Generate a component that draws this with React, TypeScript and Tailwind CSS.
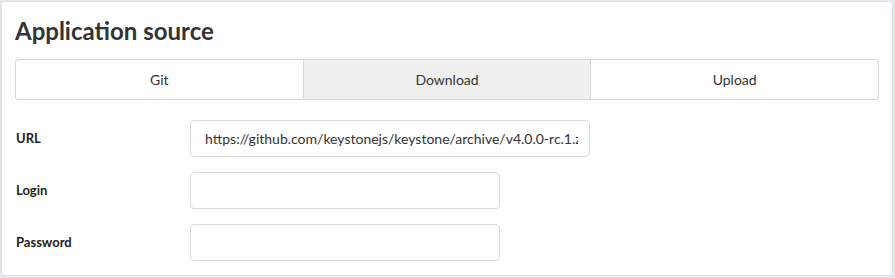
import React from "react";

export default function App() {
  const rows = [
    { label: "URL", value: "https://github.com/keystonejs/keystone/archive/v4.0.0-rc.1.zip", w: "w-[400px]" },
    { label: "Login", value: "", w: "w-[310px]" },
    { label: "Password", value: "", w: "w-[310px]" },
  ];
  return (
    <div className="w-[895px] h-[278px] bg-[#e6e9ec] pt-[1px] pl-[1px] pr-[2px] pb-[2px]" style={{ fontFamily: "Lato, 'Noto Sans', sans-serif" }}>
      <div className="h-[275px] rounded-[4px] border border-[#dde1e5] bg-white pl-[13px] pr-[13px]">
        <h1 className="pt-[14px] h-[57px] text-[24px] leading-[30px] font-bold text-[#333]">Application source</h1>
        <div className="flex h-[41px] rounded-[3px] border border-[#d6d6d6] text-[14px] text-[#333]">
          <div className="flex-1 flex items-center justify-center">Git</div>
          <div className="flex-1 flex items-center justify-center bg-[#f0f0f0] border-l border-r border-[#d6d6d6]">Download</div>
          <div className="flex-1 flex items-center justify-center">Upload</div>
        </div>
        <div className="mt-[20px] flex flex-col gap-[15px]">
          {rows.map((r) => (
            <div key={r.label} className="flex items-center h-[37px]">
              <label className="w-[175px] pl-[1px] text-[13px] font-bold text-[#222]">{r.label}</label>
              <input
                readOnly
                value={r.value}
                className={`${r.w} h-[37px] rounded-[4px] border border-[#dadada] pl-[14px] pr-[11px] text-[14px] text-[#333] outline-none`}
                style={{ fontFamily: "Lato, sans-serif" }}
              />
            </div>
          ))}
        </div>
      </div>
    </div>
  );
}
